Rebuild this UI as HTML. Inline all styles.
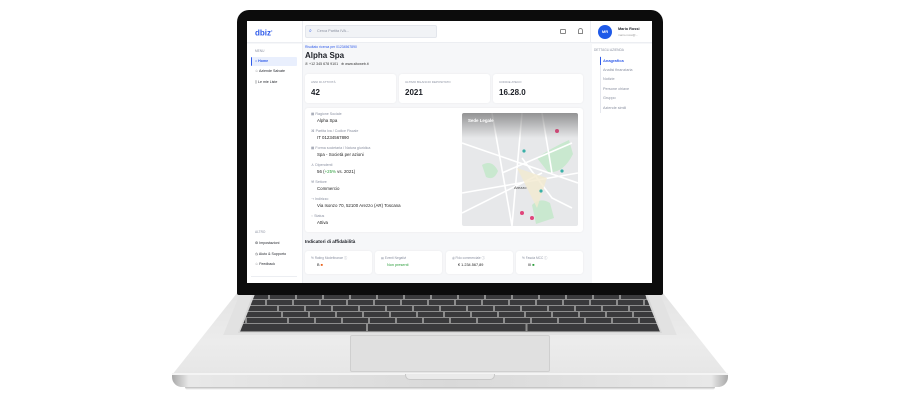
<!DOCTYPE html>
<html><head><meta charset="utf-8"><style>
*{margin:0;padding:0;box-sizing:border-box}
body{width:900px;height:400px;background:#fff;position:relative;overflow:hidden;font-family:"Liberation Sans",sans-serif;color:#1c1f26}
.a{position:absolute}
.bezel{left:237px;top:10px;width:426px;height:285px;background:#0c0c0c;border-radius:12px 12px 2px 2px}
.screen{left:247px;top:21px;width:405px;height:262px;background:#f6f7f9;overflow:hidden}
.t{position:absolute;white-space:nowrap;line-height:1}
.card{position:absolute;background:#fff;border-radius:3px;box-shadow:0 0 2px rgba(0,0,0,.06)}
.lab{font-size:3.6px;color:#8a90a0}
.val{font-size:4.4px;color:#222}
.row{position:absolute;left:0;width:420px;height:5px;background:repeating-linear-gradient(90deg,#3a3a3c 0 25px,#8d8d8d 25px 27px)}
</style></head><body>
<!-- base -->
<div class="a" style="left:172px;top:293px;width:556px;height:82px;background:linear-gradient(#e4e4e4,#ececec 60%,#e6e6e6);clip-path:polygon(11.7% 0,88.3% 0,100% 100%,0 100%)"></div>
<div class="a" style="left:180px;top:295px;width:540px;height:40px;background:#e2e2e2;clip-path:polygon(11% 0,89% 0,92% 100%,8% 100%)"></div>
<div class="a" style="left:238px;top:294px;width:424px;height:39px;background:#d6d6d6;clip-path:polygon(3.5% 0,96.5% 0,100% 100%,0 100%)"></div>
<div class="a" style="left:240px;top:295px;width:420px;height:37px;clip-path:polygon(3.5% 0,96.5% 0,100% 100%,0 100%);background:#8d8d8d;overflow:hidden">
 <div class="row" style="top:0;height:4px;background-position:3px 0"></div>
 <div class="row" style="top:5px;background-position:0 0"></div>
 <div class="row" style="top:11px;background-position:12px 0"></div>
 <div class="row" style="top:17px;background-position:16px 0"></div>
 <div class="row" style="top:23px;background-position:22px 0"></div>
 <div class="row" style="top:29px;height:7px;background:linear-gradient(90deg,#3a3a3c 0 30%,#8d8d8d 30% 30.5%,#3a3a3c 30.5% 68%,#8d8d8d 68% 68.5%,#3a3a3c 68.5%)"></div>
</div>
<div class="a" style="left:350px;top:335px;width:200px;height:37px;background:#e0e0e0;border:1px solid #cfcfcf;border-radius:2px"></div>
<div class="a" style="left:172px;top:373px;width:556px;height:14px;border-radius:2px 2px 10px 10px;background:linear-gradient(90deg,#a9a9a9,#e8e8e8 3%,#d9d9d9 50%,#e8e8e8 97%,#a9a9a9)"></div>
<div class="a" style="left:172px;top:373px;width:556px;height:2px;background:#f4f4f4"></div>
<div class="a" style="left:405px;top:374px;width:90px;height:6px;border-radius:0 0 5px 5px;background:#eaeaea;border:1px solid #c8c8c8;border-top:none"></div>
<div class="a" style="left:185px;top:387px;width:530px;height:3px;background:linear-gradient(#bbb,#fff);border-radius:0 0 20px 20px"></div>
<!-- bezel -->
<div class="a bezel"></div>
<div class="a screen">
 <div class="a" style="left:0;top:0;width:405px;height:22px;background:#fff;border-bottom:1px solid #eceef2"></div>
 <div class="t" style="left:8px;top:8px;font-size:8px;font-weight:bold;color:#2f5bea">dbiz<sup style="font-size:4px">•</sup></div>
 <div class="a" style="left:55px;top:0;width:1px;height:262px;background:#eceef2"></div>
 <div class="a" style="left:58px;top:4px;width:132px;height:13px;background:#f1f3f6;border:1px solid #e3e6ec;border-radius:2px"></div>
 <div class="t" style="left:62px;top:8px;font-size:5px;color:#2f5bea">⌕</div>
 <div class="t" style="left:70px;top:8.5px;font-size:3.8px;color:#8a90a0">Cerca Partita IVA...</div>
 <div class="a" style="left:313px;top:8px;width:6px;height:5px;border:0.7px solid #888;border-radius:1px"></div>
 <div class="a" style="left:331px;top:7px;width:5px;height:6px;border:0.7px solid #888;border-radius:3px 3px 0 0"></div>
 <div class="a" style="left:343px;top:0;width:1px;height:22px;background:#eceef2"></div>
 <div class="a" style="left:351px;top:4px;width:14px;height:14px;border-radius:50%;background:#1f5ae8;color:#fff;font-size:4px;font-weight:bold;text-align:center;line-height:14px">MR</div>
 <div class="t" style="left:371px;top:7px;font-size:3.8px;font-weight:bold">Mario Rossi</div>
 <div class="t" style="left:371px;top:12.5px;font-size:3px;color:#999">mario.rossi@...</div>
 <div class="a" style="left:0;top:23px;width:55px;height:239px;background:#fff"></div>
 <div class="t lab" style="left:8px;top:29px;font-size:3.2px">MENU</div>
 <div class="a" style="left:4px;top:36px;width:46px;height:9px;background:#e9effd;border-left:1px solid #2f5bea;border-radius:1px"></div>
 <div class="t" style="left:8px;top:38.5px;font-size:3.6px;color:#2f5bea;font-weight:bold">⌂ Home</div>
 <div class="t" style="left:8px;top:49px;font-size:3.6px">☆ Aziende Salvate</div>
 <div class="t" style="left:8px;top:60px;font-size:3.6px">▯ Le mie Liste</div>
 <div class="t lab" style="left:8px;top:210px;font-size:3.2px">ALTRO</div>
 <div class="t" style="left:8px;top:221px;font-size:3.6px">⚙ Impostazioni</div>
 <div class="t" style="left:8px;top:231.5px;font-size:3.6px">◷ Aiuto &amp; Supporto</div>
 <div class="t" style="left:8px;top:242px;font-size:3.6px">☆ Feedback</div>
 <div class="a" style="left:4px;top:255px;width:46px;height:1px;background:#eceef2"></div>
 <div class="a" style="left:345px;top:23px;width:60px;height:239px;background:#fff"></div>
 <div class="t lab" style="left:347px;top:28px;font-size:3.2px">DETTAGLI AZIENDA</div>
 <div class="a" style="left:353px;top:35px;width:1px;height:57px;background:#e6e8ee"></div>
 <div class="a" style="left:353px;top:36px;width:1px;height:8px;background:#2f5bea"></div>
 <div class="t" style="left:356px;top:38px;font-size:4px;color:#2f5bea;font-weight:bold">Anagrafica</div>
 <div class="t lab" style="left:356px;top:47.5px;font-size:3.8px">Analisi finanziaria</div>
 <div class="t lab" style="left:356px;top:57px;font-size:3.8px">Notizie</div>
 <div class="t lab" style="left:356px;top:66.5px;font-size:3.8px">Persone chiave</div>
 <div class="t lab" style="left:356px;top:76px;font-size:3.8px">Gruppo</div>
 <div class="t lab" style="left:356px;top:85.5px;font-size:3.8px">Aziende simili</div>
 <div class="t" style="left:58px;top:25px;font-size:3.4px;color:#2f5bea">Risultato ricerca per 01234567890</div>
 <div class="t" style="left:58px;top:31px;font-size:8px;font-weight:bold">Alpha Spa</div>
 <div class="t" style="left:58px;top:42px;font-size:3.6px;color:#333">✆ +12 345 678 9101 &nbsp; ⊕ www.sitoweb.it</div>
 <div class="card" style="left:58px;top:53px;width:91px;height:29px"></div>
 <div class="card" style="left:152px;top:53px;width:91px;height:29px"></div>
 <div class="card" style="left:246px;top:53px;width:90px;height:29px"></div>
 <div class="t lab" style="left:64px;top:60px;font-size:3px">ANNI DI ATTIVITÀ</div>
 <div class="t lab" style="left:158px;top:60px;font-size:3px">ULTIMO BILANCIO DEPOSITATO</div>
 <div class="t lab" style="left:252px;top:60px;font-size:3px">CODICE ATECO</div>
 <div class="t" style="left:64px;top:68px;font-size:8px;font-weight:bold">42</div>
 <div class="t" style="left:158px;top:68px;font-size:8px;font-weight:bold">2021</div>
 <div class="t" style="left:252px;top:68px;font-size:8px;font-weight:bold">16.28.0</div>
 <div class="card" style="left:58px;top:87px;width:278px;height:124px"></div>
 <div class="t lab" style="left:64px;top:92px">▦ Ragione Sociale</div><div class="t val" style="left:70px;top:98px">Alpha Spa</div>
 <div class="t lab" style="left:64px;top:109px">⌘ Partita Iva / Codice Fiscale</div><div class="t val" style="left:70px;top:115px">IT 01234567890</div>
 <div class="t lab" style="left:64px;top:126px">▦ Forma societaria / Natura giuridica</div><div class="t val" style="left:70px;top:132px">Spa - Società per azioni</div>
 <div class="t lab" style="left:64px;top:143px">♙ Dipendenti</div><div class="t val" style="left:70px;top:149px">56 (<span style="color:#2a9d3a">+25%</span> vs. 2021)</div>
 <div class="t lab" style="left:64px;top:160px">⚒ Settore</div><div class="t val" style="left:70px;top:166px">Commercio</div>
 <div class="t lab" style="left:64px;top:177px">⇢ Indirizzo</div><div class="t val" style="left:70px;top:183px">Via Isonzo 70, 52100 Arezzo (AR) Toscana</div>
 <div class="t lab" style="left:64px;top:194px">◌ Status</div><div class="t val" style="left:70px;top:200px">Attiva</div>
 <div class="a" style="left:215px;top:92px;width:116px;height:113px;background:#e7e8ea;overflow:hidden;border-radius:2px">
  <svg width="116" height="113" style="position:absolute;left:0;top:0">
   <path d="M20 52 q10 -6 16 6 q-4 10 -12 6z" fill="#c9e8cf"/>
   <path d="M75 45 q14-10 32-18 l4 14 q-10 20 -25 18z" fill="#c9e8cf"/>
   <path d="M70 92 q8 -8 18 -2 l4 15 -18 6z" fill="#c9e8cf"/>
   <path d="M60 45 l30 40 20 10 M40 60 l70 -30 M0 30 l116 40 M30 0 l20 113 M0 80 l116 -20 M60 0 l-10 113 M80 0 l10 60 M0 100 l80 -40" stroke="#fff" stroke-width="1.6" fill="none"/>
   <path d="M55 55 l30 10 l-10 30 z" fill="#f3ead0" opacity=".8"/>
   <circle cx="95" cy="18" r="2" fill="#e0457b"/><circle cx="60" cy="100" r="2" fill="#e0457b"/><circle cx="70" cy="105" r="2" fill="#e0457b"/>
   <circle cx="62" cy="38" r="1.6" fill="#3ab0a8"/><circle cx="79" cy="78" r="1.6" fill="#3ab0a8"/><circle cx="100" cy="58" r="1.6" fill="#3ab0a8"/>
   <text x="52" y="76" font-size="4" font-family="Liberation Sans" fill="#444">Arezzo</text>
  </svg>
  <div class="a" style="left:0;top:0;width:116px;height:25px;background:linear-gradient(rgba(90,90,90,.6),rgba(90,90,90,0))"></div>
  <div class="t" style="left:6px;top:6px;font-size:4.4px;color:#fff;font-weight:bold">Sede Legale</div>
 </div>
 <div class="t" style="left:58px;top:219px;font-size:4.6px;font-weight:bold">Indicatori di affidabilità</div>
 <div class="card" style="left:58px;top:230px;width:67px;height:23px"></div>
 <div class="card" style="left:128px;top:230px;width:67px;height:23px"></div>
 <div class="card" style="left:199px;top:230px;width:67px;height:23px"></div>
 <div class="card" style="left:269px;top:230px;width:67px;height:23px"></div>
 <div class="t lab" style="left:64px;top:236px;font-size:3.2px">% Rating Modefinance ⓘ</div><div class="t val" style="left:70px;top:243px;font-size:3.8px">B <span style="color:#e8641f">■</span></div>
 <div class="t lab" style="left:134px;top:236px;font-size:3.2px">▤ Eventi Negativi</div><div class="t val" style="left:140px;top:243px;font-size:3.8px;color:#2a9d3a">Non presenti</div>
 <div class="t lab" style="left:205px;top:236px;font-size:3.2px">⇶ Fido commerciale ⓘ</div><div class="t val" style="left:211px;top:243px;font-size:3.8px">€ 1.234.567,89</div>
 <div class="t lab" style="left:275px;top:236px;font-size:3.2px">% Fascia MCC ⓘ</div><div class="t val" style="left:281px;top:243px;font-size:3.8px">III <span style="color:#2a9d3a">■</span></div>
</div>
</body></html>
